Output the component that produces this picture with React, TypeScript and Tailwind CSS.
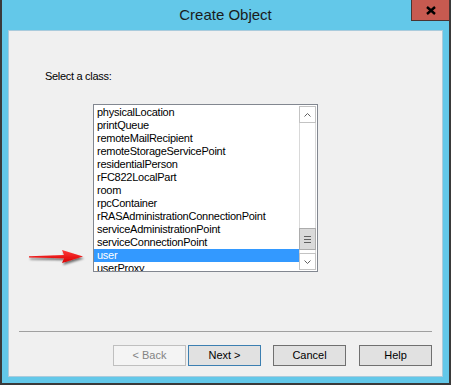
const classes = [
  'physicalLocation',
  'printQueue',
  'remoteMailRecipient',
  'remoteStorageServicePoint',
  'residentialPerson',
  'rFC822LocalPart',
  'room',
  'rpcContainer',
  'rRASAdministrationConnectionPoint',
  'serviceAdministrationPoint',
  'serviceConnectionPoint',
  'user',
  'userProxy',
]

function Chevron({ up }: { up?: boolean }) {
  return (
    <svg width="7" height="4" viewBox="0 0 7 4">
      <polyline
        points={up ? '0.5,3.5 3.5,0.5 6.5,3.5' : '0.5,0.5 3.5,3.5 6.5,0.5'}
        fill="none"
        stroke="#606060"
        strokeWidth="1"
      />
    </svg>
  )
}

function ScrollBar() {
  return (
    <div className="my-[1px] mr-[1px] flex w-[17px] shrink-0 flex-col">
      <div className="flex h-[17px] items-center justify-center border border-[#c3c3c3] bg-white">
        <Chevron up />
      </div>
      <div className="flex flex-1 flex-col justify-end border-x border-[#d9d9d9] bg-white pb-[3px]">
        <div className="-mx-[1px] flex h-[22px] flex-col items-center justify-center gap-[2px] border border-[#acacac] bg-[#dadada]">
          <div className="h-px w-[7px] bg-[#606060]" />
          <div className="h-px w-[7px] bg-[#606060]" />
          <div className="h-px w-[7px] bg-[#606060]" />
        </div>
      </div>
      <div className="flex h-[17px] items-center justify-center border border-[#c3c3c3] bg-white">
        <Chevron />
      </div>
    </div>
  )
}

function DialogButton({
  label,
  variant = 'normal',
}: {
  label: string
  variant?: 'normal' | 'default' | 'disabled'
}) {
  const look =
    variant === 'disabled'
      ? 'border-[#bfbfbf] bg-[#f4f4f4] text-[#838383]'
      : variant === 'default'
        ? 'border-[#3c7fb1] bg-[#e1e1e1] text-black'
        : 'border-[#707070] bg-[#e1e1e1] text-black'
  return (
    <button
      type="button"
      className={`flex h-[21px] w-[73px] items-center justify-center border text-[11px] leading-none ${look}`}
    >
      {label}
    </button>
  )
}

function RedArrow() {
  return (
    <svg
      className="absolute left-[22px] top-[244px]"
      width="66"
      height="26"
      viewBox="0 0 66 26"
    >
      <defs>
        <linearGradient id="arrowFill" x1="0" y1="0" x2="0" y2="1">
          <stop offset="0" stopColor="#ff3a3a" />
          <stop offset="1" stopColor="#d80000" />
        </linearGradient>
        <filter id="arrowShadow" x="-20%" y="-40%" width="140%" height="200%">
          <feDropShadow dx="1" dy="2" stdDeviation="1.3" floodColor="#000" floodOpacity="0.55" />
        </filter>
      </defs>
      <path
        d="M5 12.2 L40 11 L38 6 L59 12.5 L38 19 L40 14.2 L5 13.4 Z"
        fill="url(#arrowFill)"
        filter="url(#arrowShadow)"
      />
    </svg>
  )
}

export default function App() {
  return (
    <div className="relative flex h-[385px] w-[451px] flex-col border-x-2 border-b-2 border-[#3a3a3a] bg-[#63c8e9] font-['Liberation_Sans',Arial,sans-serif]">
      <div className="relative flex h-[30px] shrink-0 items-center justify-center">
        <span className="pt-[1px] text-[15px] text-[#1b1b1b]">Create Object</span>
        <button
          type="button"
          className="absolute -right-[1px] top-0 flex h-[21px] w-[39px] items-center justify-center border-x border-b border-[#4a3432] bg-[#c75a50]"
        >
          <svg width="10" height="9" viewBox="0 0 10 9">
            <path d="M1 1 L9 8 M9 1 L1 8" stroke="#000" strokeWidth="2.4" />
          </svg>
        </button>
      </div>

      <div className="mx-[6px] mb-[6px] flex flex-1 flex-col border border-[#aacbdc] bg-[#f0f0f0] text-black">
        <div className="mt-[39px] pl-[36px] text-[11px] leading-[13px] tracking-[-0.3px]">
          Select a class:
        </div>

        <div className="ml-[84px] mt-[21px] flex h-[168px] w-[225px] border border-[#828790] bg-white">
          <div className="min-w-0 flex-1 overflow-hidden pt-[1px]">
            {classes.map((name) => (
              <div
                key={name}
                className={`h-[13px] whitespace-nowrap pl-[3px] text-[11px] leading-[13px] tracking-[-0.25px] ${
                  name === 'user' ? 'bg-[#3399ff] text-white' : 'text-black'
                }`}
              >
                {name}
              </div>
            ))}
          </div>
          <ScrollBar />
        </div>

        <div className="flex-1" />

        <div className="mx-[10px] h-px bg-[#a0a0a0]" />

        <div className="mt-[13px] mb-[10px] mr-[10px] flex justify-end">
          <DialogButton label="< Back" variant="disabled" />
          <div className="ml-[2px]">
            <DialogButton label="Next >" variant="default" />
          </div>
          <div className="ml-[12px]">
            <DialogButton label="Cancel" />
          </div>
          <div className="ml-[13px]">
            <DialogButton label="Help" />
          </div>
        </div>
      </div>

      <RedArrow />
    </div>
  )
}
